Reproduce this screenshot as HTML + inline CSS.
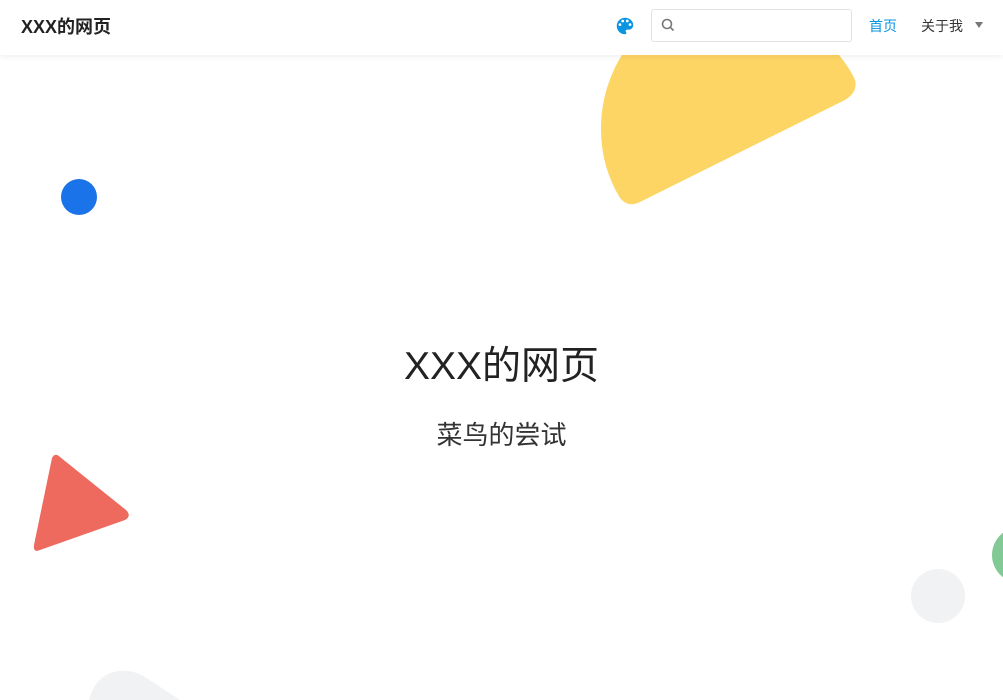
<!DOCTYPE html>
<html><head><meta charset="utf-8"><style>
html,body{margin:0;padding:0;width:1003px;height:700px;overflow:hidden;background:#fff;font-family:"Liberation Sans","Noto Sans CJK SC",sans-serif;}
.bg{position:absolute;left:0;top:0;}
.hdr{position:absolute;left:0;top:0;width:1003px;height:55px;background:#fff;box-shadow:0 1px 6px rgba(0,0,0,0.08);z-index:2;}
.logo{position:absolute;left:21px;top:13px;font-size:18px;font-weight:bold;color:#222;}
.search{position:absolute;left:651px;top:9px;width:201px;height:33px;border:1px solid #e3e3e3;border-radius:3px;box-sizing:border-box;}
.nav1{position:absolute;left:869px;top:16px;font-size:14px;color:#0b95e0;}
.nav2{position:absolute;left:921px;top:16px;font-size:14px;color:#333;}
.h1{position:absolute;left:0;width:1003px;text-align:center;top:341px;font-size:39px;color:#222;line-height:52px;}
.h2{position:absolute;left:0;width:1003px;text-align:center;top:418px;font-size:26px;color:#333;line-height:34px;}
</style></head><body>
<svg class="bg" width="1003" height="700" viewBox="0 0 1003 700">
<path d="M625 50 L835 50 Q850 68 855 80 Q858 92 845 100 L640 202 Q628 208 620 198 Q600 165 601 125 Q602 85 625 50Z" fill="#fdd565"/>
<circle cx="79" cy="197" r="18" fill="#1a73e8"/>
<path d="M52 458 Q55 452 60 457 L126 510 Q132 516 125 520 L40 550 Q33 553 34 545Z" fill="#ee695e"/>
<circle cx="938" cy="596" r="27" fill="#f1f2f4"/>
<circle cx="1020" cy="555" r="28" fill="#81c995"/>
<path d="M89 700 Q95 675 118 671 Q132 669 145 677 L180 700Z" fill="#f1f2f4"/>
</svg>
<div class="hdr">
<div class="logo">XXX的网页</div>
<svg style="position:absolute;left:614px;top:15px" width="22" height="22" viewBox="0 0 24 24"><path fill="#0b95e0" d="M12 3a9 9 0 0 0 0 18c.83 0 1.5-.67 1.5-1.5 0-.39-.15-.74-.39-1.01-.23-.26-.38-.61-.38-.99 0-.83.67-1.5 1.5-1.5H16c2.76 0 5-2.24 5-5 0-4.42-4.03-8-9-8zm-5.5 9a1.5 1.5 0 1 1 0-3 1.5 1.5 0 0 1 0 3zm3-4a1.5 1.5 0 1 1 0-3 1.5 1.5 0 0 1 0 3zm5 0a1.5 1.5 0 1 1 0-3 1.5 1.5 0 0 1 0 3zm3 4a1.5 1.5 0 1 1 0-3 1.5 1.5 0 0 1 0 3z"/></svg>
<div class="search"><svg style="position:absolute;left:9px;top:8px" width="14" height="14" viewBox="0 0 14 14"><circle cx="6" cy="6" r="4.5" fill="none" stroke="#777" stroke-width="1.6"/><path d="M9.3 9.3L12.5 12.5" stroke="#777" stroke-width="1.6"/></svg></div>
<div class="nav1">首页</div>
<div class="nav2">关于我</div>
<svg style="position:absolute;left:975px;top:22px" width="9" height="6"><path d="M0 0H8L4 6Z" fill="#777"/></svg>
</div>
<div class="h1">XXX的网页</div>
<div class="h2">菜鸟的尝试</div>
</body></html>
